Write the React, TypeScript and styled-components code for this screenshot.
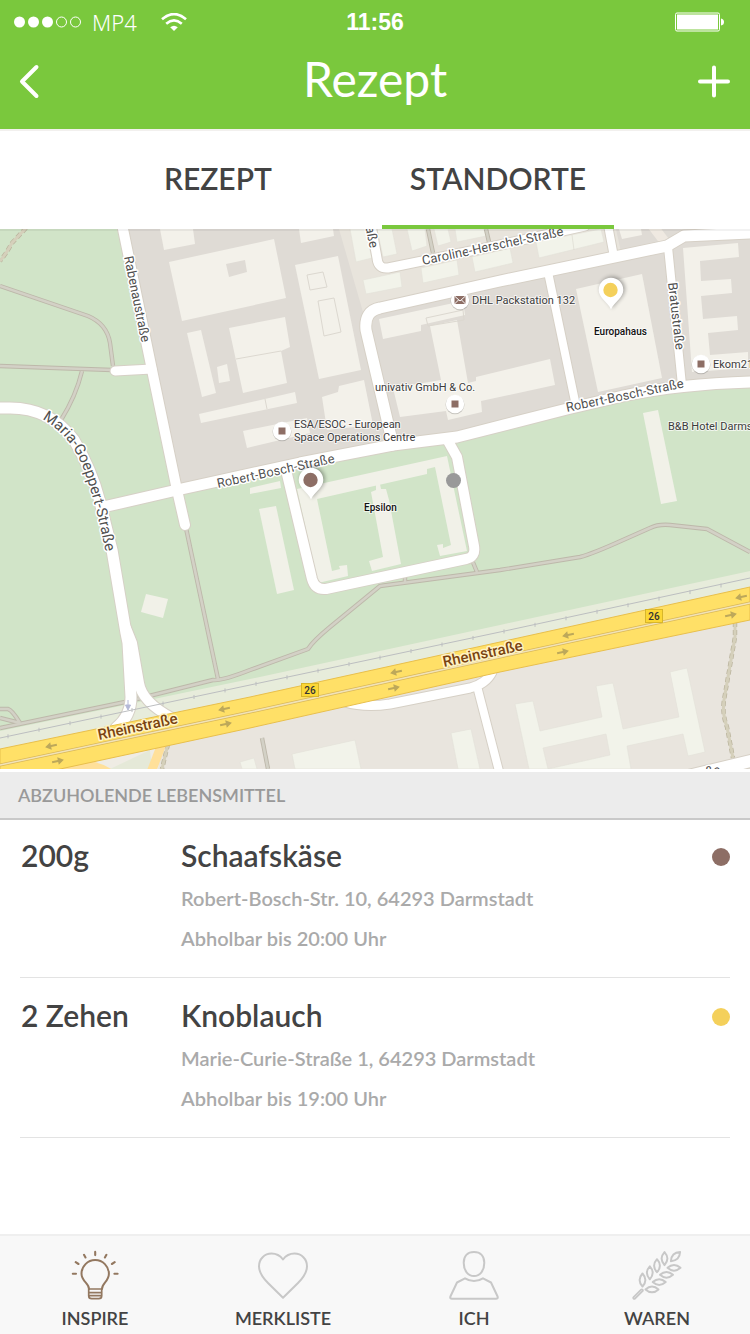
import React, { useState } from "react";
import styled, { createGlobalStyle } from "styled-components";

const GREEN = "#7ac83d";
const INK = "#434343";
const BROWN = "#8d6e65";
const YELLOW = "#f4d05b";

const GlobalStyle = createGlobalStyle`
  * { box-sizing: border-box; }
  body { margin: 0; background: #fff; font-family: Lato, sans-serif; color: ${INK}; }
  button { font: inherit; color: inherit; background: none; border: 0; padding: 0; cursor: pointer; }
  a { color: inherit; text-decoration: none; }
  h1, h2, h3, p, ul { margin: 0; padding: 0; }
`;

const Screen = styled.div`
  display: flex;
  flex-direction: column;
  min-height: 100vh;
`;

const Header = styled.header`
  background: ${GREEN};
  color: #fff;
  border-bottom: 2px solid #f2f0ee;
`;

const StatusBar = styled.div`
  display: grid;
  grid-template-columns: 1fr auto 1fr;
  align-items: center;
  height: 44px;
  padding: 0 14px;
`;

const Carrier = styled.div`
  display: flex;
  align-items: center;
  gap: 10px;
  font-family: "Noto Sans", sans-serif;
  font-size: 22px;
  font-weight: 300;
  line-height: 44px;
  svg:last-child { margin-left: 14px; }
`;

const Clock = styled.time`
  font-family: "Liberation Sans", Arial, sans-serif;
  font-size: 23px;
  font-weight: 700;
  line-height: 44px;
`;

const BatterySlot = styled.div`
  display: flex;
  justify-content: flex-end;
  padding-right: 12px;
`;

const TitleBar = styled.div`
  display: flex;
  align-items: center;
  justify-content: space-between;
  height: 85px;
  padding: 0 18px;
`;

const Title = styled.h1`
  font-size: 48px;
  font-weight: 400;
  line-height: 72px;
  padding-bottom: 16px;
`;

const IconButton = styled.button`
  display: flex;
  width: 36px;
  height: 36px;
  margin-bottom: 12px;
`;

const Tabs = styled.div`
  display: flex;
  justify-content: center;
  gap: 82px;
  height: 98px;
`;

const Tab = styled.button<{ $active?: boolean }>`
  padding: 0 28px;
  font-size: 30px;
  font-weight: 600;
  line-height: 36px;
  border-bottom: 4px solid ${(p) => (p.$active ? GREEN : "transparent")};
`;

const MapFrame = styled.div`
  border-bottom: 3px solid #fff;
  svg { display: block; width: 100%; height: auto; }
`;

const SectionTitle = styled.h2`
  height: 46px;
  padding: 0 18px;
  background: #ececec;
  box-shadow: 0 2px 0 #c9c9c9;
  color: #999;
  font-size: 18px;
  font-weight: 600;
  line-height: 46px;
`;

const List = styled.ul`
  flex: 1;
  padding: 0 20px;
  list-style: none;
`;

const Item = styled.li`
  display: grid;
  grid-template-columns: 160px 1fr auto;
  padding: 17px 0 19px 1px;
  border-bottom: 1px solid #e3e3e3;
`;

const Amount = styled.p`
  font-size: 30px;
  font-weight: 600;
  line-height: 40px;
`;

const Name = styled.h3`
  margin-bottom: 3px;
  font-size: 30px;
  font-weight: 600;
  line-height: 40px;
`;

const Detail = styled.p`
  color: #aaa;
  font-size: 20px;
  font-weight: 600;
  line-height: 40px;
`;

const Dot = styled.span<{ $color: string }>`
  width: 18px;
  height: 18px;
  margin-top: 13px;
  border-radius: 50%;
  background: ${(p) => p.$color};
`;

const BottomNav = styled.nav`
  display: grid;
  grid-template-columns: 190fr 186fr 196fr 170fr;
  height: 100px;
  padding-right: 8px;
  background: #f8f8f8;
  border-top: 2px solid #efefef;
`;

const NavLink = styled.a<{ $active?: boolean }>`
  display: flex;
  flex-direction: column;
  align-items: center;
  padding-top: 14px;
  font-size: 18px;
  font-weight: 600;
  line-height: 36px;
  svg { color: ${(p) => (p.$active ? "#937860" : "#c8c8c8")}; }
`;

/* ---------- icons ---------- */

const NavSvg = ({ children }: { children: React.ReactNode }) => (
  <svg width="50" height="50" viewBox="0 0 50 50" fill="none" stroke="currentColor" strokeWidth="2"
    strokeLinecap="round" strokeLinejoin="round" aria-hidden="true">
    {children}
  </svg>
);

const BulbIcon = () => (
  <NavSvg>
    <path d="M19 39C19 33 11.5 31.500 11.5 23.800a13.700 13.700 0 0 1 27.400 0C38.900 31.500 32 33 32 39" />
    <path d="M18.700 39h13v6.700q0 3-3 3h-7q-3 0-3-3zM19 42.600h12.500M19 45.600h12.500" strokeWidth="1.700" />
    <path d="M25.200 1.900v3.200M14 4.800l1.500 2.700M36.400 4.800l-1.500 2.700M5.700 12.200l2.800 1.800M44.700 12.200l-2.800 1.800M2.800 23.800h3.200M44.400 23.800h3.200" strokeWidth="2.100" />
  </NavSvg>
);

const HeartIcon = () => (
  <NavSvg>
    <path d="M25 9.500C22 5.500 18 3.600 13.500 3.600 6.500 3.600 1 9 1 16.200 1 23 5 28 10 33L25 47.800 40 33C45 28 49 23 49 16.200 49 9 43.500 3.600 36.500 3.600 32 3.600 28 5.500 25 9.500z" />
  </NavSvg>
);

const PersonIcon = () => (
  <NavSvg>
    <path d="M25 2c6.500 0 10.300 4 10.300 10.700C35.300 20.500 31 26 25 26S14.700 20.500 14.700 12.700C14.700 6 18.500 2 25 2z" />
    <path d="M16 28.300 8 32.500 1.400 46.500Q.700 48.700 3 48.700H47Q49.300 48.700 48.600 46.500L42 32.500 34 28.300Q30 30.900 25 30.900T16 28.300z" />
  </NavSvg>
);

const LEAF = "M0-6.500C2-4.300 2.900-2.200 2.900 0S2 4.300 0 6.500C-2 4.300-2.900 2.200-2.900 0S-2-4.300 0-6.500z";
const WHEAT: [number, number, number][] = [
  [10.500, 30, 0], [17.800, 22.800, 0], [25, 15.700, 0], [32.500, 8.600, 0], [43.500, 6.600, 45],
  [42, 17.800, 90], [34.500, 24.800, 90], [27.200, 32.100, 90], [20, 39.400, 90],
];

const WheatIcon = () => (
  <NavSvg>
    {WHEAT.map(([x, y, r]) => (
      <path key={`${x}`} d={LEAF} transform={`translate(${x} ${y}) rotate(${r})`} />
    ))}
    <path d="M2.300 47.800 9.800 40.400" strokeWidth="3.800" />
    <path d="M2.500 47.600 9.600 40.600" stroke="#ececec" strokeWidth=".6" />
  </NavSvg>
);

const SignalIcon = () => (
  <svg width="68" height="12" viewBox="0 0 68 12" fill="none" stroke="#fff" aria-hidden="true">
    {[5.500, 19.500, 33.500].map((x) => <circle key={x} cx={x} cy="6" r="5.500" fill="#fff" stroke="none" />)}
    {[47.500, 61.500].map((x) => <circle key={x} cx={x} cy="6" r="5" />)}
  </svg>
);

const WifiIcon = () => (
  <svg width="26" height="18" viewBox="0 0 26 18" fill="none" stroke="#fff" strokeWidth="2.600" aria-label="WLAN">
    <path d="M1 6.300Q13-4.200 25 6.300M5.200 10.700Q13 4 20.800 10.700" />
    <path d="M9.200 14.300Q13 11.200 16.800 14.300L13 18z" fill="#fff" stroke="none" />
  </svg>
);

const BatteryIcon = () => (
  <svg width="49" height="20" viewBox="0 0 49 20" aria-label="Batterie">
    <rect x=".5" y="1" width="44" height="18" rx="1.500" fill="none" stroke="#fff" />
    <rect x="2" y="2.500" width="41" height="15" fill="#fff" />
    <path d="M46 6.500q3 .5 3 3.500t-3 3.500z" fill="#fff" />
  </svg>
);

/* ---------- map ---------- */

type Shape = string;

const FACTORY_BUILDINGS: Shape[] = [
  "160,229 193,229 195,244 164,250",
  "299,229 333,229 334,236 301,243",
  "187,333 201,330 216,393 202,397",
  "217,367 227,364 230,381 219,383",
  "229,328 285,317 290,347 281,351 287,383 243,393",
  "199,414 295,392 297,403 201,423",
  "243,431 307,418 310,433 247,448",
  "295,265 338,256 361,370 319,379",
  "322,397 338,392 339,386 364,380 373,425 327,430",
  "619,229 641,229 642,235 622,239",
  "683,248 738,243 739,257 700,261 701,281 731,279 732,293 701,296 703,319 737,316 738,330 708,333 710,355 748,352 748,368 692,372",
  "576,289 642,274 662,378 598,392",
  "379,319 463,301 465,315 421,325 421,331 383,339",
  "430,326 457,320 468,383 476,381 476,377 550,359 555,385 481,401 482,412 448,420 446,411 400,417 393,388 441,380",
];

const TOWN_BUILDINGS: Shape[] = [
  "350,229 365,229 372,258 356,262",
  "377,229 392,229 397,254 383,257",
  "407,229 425,229 427,246 412,251",
  "434,229 448,229 451,242 438,246",
  "455,229 484,229 486,236 457,242",
  "363,280 400,272 402,287 366,294",
  "421,268 457,260 459,275 423,283",
  "472,257 510,248 513,263 475,272",
  "536,242 601,229 604,242 539,258",
  "292,754 355,740 361,769 295,769",
  "451,733 471,729 480,769 458,769",
  "240,762 254,758 257,769 242,769",
];

const PARK_BUILDINGS: Shape[] = [
  "643,413 658,410 677,501 661,504",
  "259,509 276,506 294,590 277,594",
  "146,594 168,599 163,618 141,612",
  "250,488 280,481 281,488 250,494",
  "297,489 447,456 467,551 440,556 437,545 443,544 443,548 451,545 435,467 427,469 427,474 317,499 332,571 340,569 339,566 347,565 348,576 318,583",
  "371,492 376,490 376,484 380,484 381,489 386,489 389,500 401,564 372,571 369,561 383,557",
];

const FOOTPATHS: Shape[] = [
  "M0 286 88 316Q107 324 110 343L113 366",
  "M0 366 112 370",
  "M82 371Q76 396 61 420",
  "M0 728 125 702 213 680Q222 681 250 670L308 649Q313 641 330 627L380 586 500 570 580 557Q592 554 623 540L650 528Q658 524 670 525L707 529 750 552",
  "M186 528 218 679",
  "M405 575v7M472 560 477 572",
  "M0 709H8Q12 710 20 723M0 718 20 723",
  "M262 738 268 769",
];

const ROADS: { d: string; w: number }[] = [
  { d: "M0 408H10Q50 408 74 440 92 470 100 502L112 550 126 633 128 643 131 697Q131 716 116 728", w: 11 },
  { d: "M126 628 132 643 139 683Q142 702 172 718", w: 10 },
  { d: "M123 229 152 370 177 490 185 525", w: 10 },
  { d: "M115 371 152 369", w: 9 },
  { d: "M103 507 177 490 300 463 393 445 457 437 567 409 623 396Q680 384 750 382", w: 11 },
  { d: "M393 445 366 330Q364 311 380 308L500 281 667 246 684 236 750 233", w: 11 },
  { d: "M668 247 682 385", w: 8 },
  { d: "M548 272 576 406", w: 8 },
  { d: "M608 225 614 257", w: 8 },
  { d: "M371 225 377 258Q378 269 388 268L500 245 585 226", w: 9 },
  { d: "M286 470 312 579Q315 590 326 589L466 559Q476 557 474 546L457 457 448 441", w: 10 },
  { d: "M478 690 500 775", w: 8 },
  { d: "M345 702Q365 708 390 704L470 688Q486 684 492 672", w: 9 },
  { d: "M680 778 755 760", w: 12 },
];

const ARROWS: { x: number; y: number; left?: boolean }[] = [
  { x: 51, y: 746, left: true }, { x: 58, y: 761 },
  { x: 224, y: 709, left: true }, { x: 226, y: 724 },
  { x: 396, y: 672, left: true }, { x: 394, y: 688 },
  { x: 568, y: 635, left: true }, { x: 563, y: 652 },
  { x: 741, y: 597, left: true }, { x: 731, y: 615 },
];

const STREETS: { id: string; d: string; text: string; size: number }[] = [
  { id: "rabenau", d: "M124 257 145 360", text: "Rabenaustraße", size: 13 },
  { id: "maria", d: "M42 419Q72 436 84 470 97 505 110 575", text: "Maria-Goeppert-Straße", size: 15 },
  { id: "bosch-west", d: "M218 488 360 457", text: "Robert-Bosch-Straße", size: 13 },
  { id: "bosch-east", d: "M567 412 710 382", text: "Robert-Bosch-Straße", size: 13 },
  { id: "bratu", d: "M668 283 678 370", text: "Bratustraße", size: 13 },
  { id: "caroline", d: "M423 265 590 230", text: "Caroline-Herschel-Straße", size: 13 },
  { id: "south", d: "M684 781 760 766", text: "Straße", size: 13 },
  { id: "north", d: "M364 219 374 270", text: "traße", size: 13 },
];

const railTicks = Array.from({ length: 25 }, (_, i) => {
  const x = 8 + i * 31;
  return { x, y: 738 - x * 0.2115 };
});

const MapLabels = styled.g`
  font-family: Roboto, sans-serif;
  font-size: 11px;
  fill: #3c3c3c;
  stroke: #fff;
  stroke-opacity: 0.7;
  stroke-width: 2px;
  stroke-linejoin: round;
  paint-order: stroke;
`;

const StreetLabels = styled.g`
  font-family: Roboto, sans-serif;
  font-weight: 400;
  fill: #505050;
  stroke: #fff;
  stroke-width: 3px;
  stroke-linejoin: round;
  paint-order: stroke;
`;

const HighwayLabels = styled.g`
  font-family: Roboto, sans-serif;
  font-size: 15px;
  font-weight: 500;
  fill: #7a4310;
  stroke: #fff3c4;
  stroke-width: 3px;
  stroke-linejoin: round;
  paint-order: stroke;
`;

const Poi = ({ x, y, mail }: { x: number; y: number; mail?: boolean }) => (
  <g transform={`translate(${x} ${y})`}>
    <circle r="9.500" cy=".8" fill="#000" opacity=".18" />
    <circle r="9.200" fill="#fff" />
    {mail ? (
      <g>
        <rect x="-5.500" y="-4" width="11" height="8" fill={BROWN} />
        <path d="M-5.500-4 0 1 5.500-4M-5.500 4-1.500 0M5.500 4 1.500 0" fill="none" stroke="#fff" strokeWidth="1" />
      </g>
    ) : (
      <rect x="-3.500" y="-3.500" width="7" height="7" fill={BROWN} />
    )}
  </g>
);

const Pin = ({ x, y, color }: { x: number; y: number; color: string }) => (
  <g transform={`translate(${x} ${y})`}>
    <path d="M0 19.500C-3 12-12.300 8-12.300 0a12.300 12.300 0 0 1 24.600 0C12.300 8 3 12 0 19.500z" fill="#000"
      opacity=".35" transform="translate(1.500 -1)" filter="url(#pin-shadow)" />
    <path d="M0 19.500C-3 12-12.300 8-12.300 0a12.300 12.300 0 0 1 24.600 0C12.300 8 3 12 0 19.500z" fill="#fff" />
    <circle cx="-.5" r="7.200" fill={color} />
  </g>
);

const RouteShield = ({ x, y }: { x: number; y: number }) => (
  <g transform={`translate(${x} ${y})`}>
    <rect x="-8.500" y="-6.500" width="17" height="13" fill="#fcd735" stroke="#d8b62a" />
    <text y="3.500" textAnchor="middle" fontFamily="Roboto, sans-serif" fontSize="10" fontWeight="500" fill="#333">26</text>
  </g>
);

const CityMap = () => (
  <svg viewBox="0 229 750 540" role="img" aria-label="Karte der Standorte">
    <defs>
      <filter id="pin-shadow" x="-50%" y="-50%" width="200%" height="200%">
        <feGaussianBlur stdDeviation="2" />
      </filter>
      {STREETS.map((s) => <path key={s.id} id={s.id} d={s.d} />)}
    </defs>

    {/* ground */}
    <rect y="229" width="750" height="540" fill="#d1e4c8" />
    <path d="M123 229H750V382L623 396 457 437 393 445 177 490 152 370z" fill="#dfdbd5" />
    <path d="M339 229H616L622 257 500 281 380 308 366 318 363 312z" fill="#e8e4dc" />
    <path d="M652 225 668 246" stroke="#efe9e1" strokeWidth="10" />
    <path d="M0 731 250 679 500 625 750 571V625L0 785z" fill="#e7ecdb" />
    <path d="M0 765 250 710 750 600V769H0z" fill="#e9e5de" />
    <path d="M0 769 58 762 165 735 158 769z" fill="#efece4" />
    <path d="M110 769 150 750 152 769z" fill="#e5e9d8" />

    {/* buildings */}
    <g fill="#f3f1ea">
      {FACTORY_BUILDINGS.map((p) => <polygon key={p} points={p} />)}
      <path fillRule="evenodd" d="M169 262 274 239 286 298 182 321zM226 264 245 260 247 272 229 277z" />
    </g>
    <g fill="none" stroke="#dcd8d0">
      <path d="M236 359 281 351M307 275 323 272 327 287 310 290zM318 301 334 298 341 332 324 336zM265 399 267 409" />
      <path d="M426 318 463 310 464 320 428 326z" />
    </g>
    <g fill="#f2f3ea" stroke="#e3e1d8" strokeWidth=".6">
      {TOWN_BUILDINGS.map((p) => <polygon key={p} points={p} />)}
      <path fillRule="evenodd" d="M515 704 533 701 540 731 602 717 596 686 613 683 623 729 679 717 670 672 687 668 705 752 688 756 683 734 627 746 631 769H529zM543 748 606 734 610 755 548 769z" />
      <path d="M572 235 574 250" stroke="#d8d6cc" />
    </g>
    <g fill="#f1f1e8">
      {PARK_BUILDINGS.map((p) => <polygon key={p} points={p} />)}
    </g>

    {/* foot paths */}
    <g fill="none" stroke="#bdb8aa" strokeWidth="4.400" strokeLinejoin="round">
      {FOOTPATHS.map((d) => <path key={d} d={d} />)}
      <path d="M428 229 433 253M486 229 489 242" />
    </g>
    <g fill="none" stroke="#d3d1c6" strokeWidth="2.600" strokeLinejoin="round">
      {FOOTPATHS.map((d) => <path key={d} d={d} />)}
      <path d="M428 229 433 253M486 229 489 242" />
    </g>
    <g fill="none">
      <path d="M26 228 12 243Q6 254 0 261M735 622V637L724 700Q722 714 727 727L733 758M168 744 162 769" stroke="#b9b39c" strokeWidth="4.400" strokeDasharray="5 3" />
      <path d="M26 228 12 243Q6 254 0 261M735 622V637L724 700Q722 714 727 727L733 758M168 744 162 769" stroke="#d5d0bb" strokeWidth="3" />
    </g>

    {/* roads */}
    <g fill="none" stroke="#d6d0c6" strokeLinecap="round" strokeLinejoin="round">
      {ROADS.map((r) => <path key={r.d} d={r.d} strokeWidth={r.w + 2} />)}
    </g>
    <g fill="none" stroke="#fff" strokeLinecap="round" strokeLinejoin="round">
      {ROADS.map((r) => <path key={r.d} d={r.d} strokeWidth={r.w} />)}
    </g>
    <path d="M128 700v8m-2.500-3 2.500 5 2.500-5z" fill="#b4b8d6" stroke="#b4b8d6" />

    {/* railway */}
    <path d="M0 738 250 685 500 632 750 578" fill="none" stroke="#bcbec0" />
    <g stroke="#bcbec0">
      {railTicks.map((t) => <path key={t.x} d={`M${t.x} ${t.y - 2}v4`} />)}
    </g>

    {/* highway */}
    <g fill="none" stroke="#ffe09a" strokeWidth="9">
      <path d="M60 767Q92 760 112 775M163 741 150 775" />
    </g>
    <path d="M0 749 250 697 500 642 750 587V620L500 672 250 728 0 782z" fill="#ffe067" stroke="#e8bf4c" />
    <path d="M0 765 250 712 500 657 750 603" fill="none" stroke="#d9b75a" strokeWidth="3" />
    <path d="M0 765 250 712 500 657 750 603" fill="none" stroke="#f1e3b8" strokeWidth="1.500" />
    {ARROWS.map((a) => (
      <path key={`${a.x}`} transform={`translate(${a.x} ${a.y}) rotate(${a.left ? 168 : -12})`}
        d="M-6-1H0V-3.800L6 0 0 3.800V1H-6z" fill="#bda85a" />
    ))}
    <RouteShield x={310} y={690} />
    <RouteShield x={654} y={616} />

    {/* labels */}
    <StreetLabels>
      {STREETS.map((s) => (
        <text key={s.id} fontSize={s.size}><textPath href={`#${s.id}`}>{s.text}</textPath></text>
      ))}
    </StreetLabels>
    <HighwayLabels>
      <text transform="translate(99 740) rotate(-12)">Rheinstraße</text>
      <text transform="translate(444 667) rotate(-12)">Rheinstraße</text>
    </HighwayLabels>
    <Poi x={460} y={300} mail />
    <Poi x={455} y={404} />
    <Poi x={282} y={431} />
    <Poi x={701} y={364} />
    <MapLabels>
      <text x="472" y="304">DHL Packstation 132</text>
      <text x="375" y="391">univativ GmbH &amp; Co.</text>
      <text x="294" y="428">ESA/ESOC - European</text>
      <text x="294" y="441">Space Operations Centre</text>
      <text x="713" y="368">Ekom21</text>
      <text x="668" y="430">B&amp;B Hotel Darmstadt</text>
    </MapLabels>
    <g fontFamily="Roboto, sans-serif" fontSize="10" fontWeight="500" fill="#111" stroke="#fff" strokeOpacity=".6"
      strokeWidth="2" paintOrder="stroke">
      <text x="594" y="335">Europahaus</text>
      <text x="364" y="511">Epsilon</text>
    </g>
    <circle cx="453.500" cy="480.500" r="7.500" fill="#999" />
    <Pin x={611} y={290} color={YELLOW} />
    <Pin x={311} y={480} color={BROWN} />
    <rect y="229" width="750" height="2" fill="#000" opacity=".05" />
  </svg>
);

/* ---------- page ---------- */

const FOODS = [
  { amount: "200g", name: "Schaafskäse", address: "Robert-Bosch-Str. 10, 64293 Darmstadt", until: "Abholbar bis 20:00 Uhr", color: BROWN },
  { amount: "2 Zehen", name: "Knoblauch", address: "Marie-Curie-Straße 1, 64293 Darmstadt", until: "Abholbar bis 19:00 Uhr", color: YELLOW },
];

const NAV = [
  { label: "INSPIRE", Icon: BulbIcon, active: true },
  { label: "MERKLISTE", Icon: HeartIcon },
  { label: "ICH", Icon: PersonIcon },
  { label: "WAREN", Icon: WheatIcon },
];

export default function App() {
  const [tab, setTab] = useState("STANDORTE");
  return (
    <Screen>
      <GlobalStyle />
      <Header>
        <StatusBar>
          <Carrier>
            <SignalIcon />
            <span>MP4</span>
            <WifiIcon />
          </Carrier>
          <Clock>11:56</Clock>
          <BatterySlot><BatteryIcon /></BatterySlot>
        </StatusBar>
        <TitleBar>
          <IconButton aria-label="Zurück">
            <svg width="36" height="36" viewBox="0 0 36 36" fill="none" stroke="#fff" strokeWidth="4" strokeLinecap="round" strokeLinejoin="round">
              <path d="M18.500 4 4 18.500 18.500 33" />
            </svg>
          </IconButton>
          <Title>Rezept</Title>
          <IconButton aria-label="Hinzufügen">
            <svg width="36" height="36" viewBox="0 0 36 36" stroke="#fff" strokeWidth="4" strokeLinecap="round">
              <path d="M18 4.500v28M4 18.500h28" />
            </svg>
          </IconButton>
        </TitleBar>
      </Header>
      <Tabs role="tablist">
        {["REZEPT", "STANDORTE"].map((t) => (
          <Tab key={t} role="tab" aria-selected={tab === t} $active={tab === t} onClick={() => setTab(t)}>{t}</Tab>
        ))}
      </Tabs>
      <MapFrame><CityMap /></MapFrame>
      <SectionTitle>ABZUHOLENDE LEBENSMITTEL</SectionTitle>
      <List>
        {FOODS.map((f) => (
          <Item key={f.name}>
            <Amount>{f.amount}</Amount>
            <div>
              <Name>{f.name}</Name>
              <Detail>{f.address}</Detail>
              <Detail>{f.until}</Detail>
            </div>
            <Dot $color={f.color} />
          </Item>
        ))}
      </List>
      <BottomNav>
        {NAV.map(({ label, Icon, active }) => (
          <NavLink key={label} href="#" $active={active}>
            <Icon />
            {label}
          </NavLink>
        ))}
      </BottomNav>
    </Screen>
  );
}
